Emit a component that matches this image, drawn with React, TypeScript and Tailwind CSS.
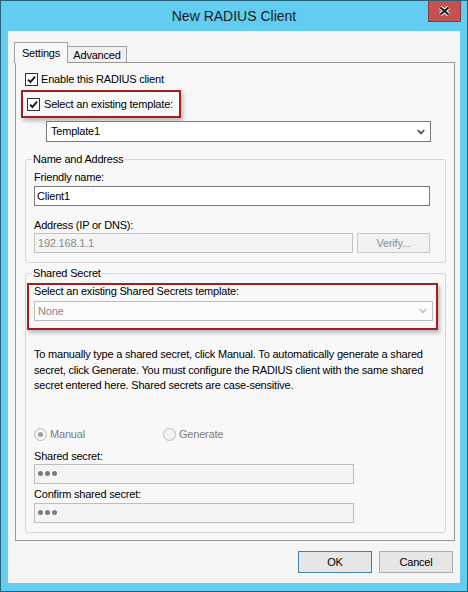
import React from 'react';

function CheckBox({ checked }: { checked: boolean }) {
  return (
    <span className="flex h-[13px] w-[13px] shrink-0 items-center justify-center border border-[#333333] bg-white">
      {checked && (
        <svg width="9" height="9" viewBox="0 0 9 9">
          <path d="M1 4.6 L3.4 7 L8 1.6" fill="none" stroke="#1a1a1a" strokeWidth="1.9" />
        </svg>
      )}
    </span>
  );
}

function Radio({ checked }: { checked: boolean }) {
  return (
    <span className="flex h-[13px] w-[13px] shrink-0 items-center justify-center rounded-full border border-[#bcbcbc] bg-[#f4f4f4]">
      {checked && <span className="h-[5px] w-[5px] rounded-full bg-[#a0a0a0]" />}
    </span>
  );
}

function Chevron({ color }: { color: string }) {
  return (
    <svg width="8" height="6" viewBox="0 0 8 6">
      <path d="M0.8 1 L4 4.4 L7.2 1" fill="none" stroke={color} strokeWidth="1.8" />
    </svg>
  );
}

function Dots() {
  return (
    <div className="flex items-center gap-[2px] pl-[3px]">
      <span className="h-[5px] w-[5px] rounded-full bg-[#7d7d7d]" />
      <span className="h-[5px] w-[5px] rounded-full bg-[#7d7d7d]" />
      <span className="h-[5px] w-[5px] rounded-full bg-[#7d7d7d]" />
    </div>
  );
}

export default function App() {
  return (
    <div className="flex h-[592px] w-[468px] flex-col border border-[#2a6478] bg-[#62cdf0] font-['Liberation_Sans',Arial,sans-serif] text-[11px] leading-[13px] tracking-[-0.2px] text-black">
      {/* title bar */}
      <div className="relative flex h-[30px] shrink-0 items-center justify-center">
        <span className="pt-[1px] text-[14px] tracking-normal text-[#1c1c1c]">New RADIUS Client</span>
        <div className="absolute right-[6px] top-0 flex h-[21px] w-[33px] items-center justify-center border border-[#8a3a3a] border-t-0 bg-[#c75050]">
          <svg width="11" height="10" viewBox="0 0 11 10">
            <path d="M1.5 1.5 L9.5 8.5 M9.5 1.5 L1.5 8.5" stroke="#ffffff" strokeWidth="4" />
            <path d="M1.5 1.5 L9.5 8.5 M9.5 1.5 L1.5 8.5" stroke="#1d1d1d" strokeWidth="2.2" />
          </svg>
        </div>
      </div>

      {/* client area */}
      <div className="mx-[7px] mb-[8px] flex flex-1 flex-col bg-[#f5f5f5]">
        {/* tabs */}
        <div className="flex items-end pl-[6px] pt-[11px]">
          <div className="relative z-10 -mb-px flex h-[21px] w-[54px] items-start justify-center border border-b-0 border-[#a3a3a3] bg-[#f8f8f8] pt-[4px]">
            Settings
          </div>
          <div className="flex h-[16px] w-[59px] items-center justify-center border border-b-0 border-l-0 border-[#a3a3a3] bg-[#f0f0f0] pt-[1px]">
            Advanced
          </div>
        </div>

        {/* tab page */}
        <div className="ml-[7px] flex h-[479px] w-[440px] flex-col border border-[#999999] bg-[#f8f8f8]">
          <div className="ml-[9px] mt-[10px] flex items-center gap-[3px]">
            <CheckBox checked />
            <span>Enable this RADIUS client</span>
          </div>

          <div className="ml-[5px] mt-[4px] flex h-[28px] w-[160px] items-center gap-[4px] border-2 border-[#a51d1d] pl-[4px] shadow-[2px_3px_4px_rgba(0,0,0,0.25)]">
            <CheckBox checked />
            <span>Select an existing template:</span>
          </div>

          <div className="ml-[30px] mt-[3px] flex h-[21px] w-[385px] items-center justify-between border border-[#7a7a7a] bg-white pl-[4px] pr-[5px]">
            <span>Template1</span>
            <Chevron color="#4d4d4d" />
          </div>

          {/* Name and Address */}
          <fieldset className="ml-[9px] mt-[11px] w-[421px] rounded-[3px] border border-[#d6d6d6] pb-[9px] pl-[8px]">
            <legend className="-ml-[2px] px-[1px] leading-[13px]">Name and Address</legend>
            <div className="mt-[5px]">Friendly name:</div>
            <div className="mt-[2px] flex h-[20px] w-[396px] items-center border border-[#7a7a7a] bg-white pl-[2px]">
              Client1
            </div>
            <div className="mt-[13px]">Address (IP or DNS):</div>
            <div className="mt-[1px] flex items-center gap-[4px]">
              <div className="flex h-[20px] w-[319px] items-center border border-[#c2c2c2] bg-[#f4f4f4] pl-[3px] text-[#8a8a8a]">
                192.168.1.1
              </div>
              <div className="flex h-[20px] w-[73px] items-center justify-center border border-[#c9c9c9] bg-[#f2f2f2] text-[#8d8d8d]">
                Verify...
              </div>
            </div>
          </fieldset>

          {/* Shared Secret */}
          <fieldset className="ml-[9px] mt-[4px] w-[421px] rounded-[3px] border border-[#d6d6d6] pb-[9px] pl-[8px]">
            <legend className="-ml-[2px] px-[1px] leading-[13px]">Shared Secret</legend>
            <div className="-ml-[7px] mt-[3px] w-[411px] border-2 border-[#a51d1d] pb-[7px] pl-[5px] shadow-[2px_3px_4px_rgba(0,0,0,0.25)]">
              <div>Select an existing Shared Secrets template:</div>
              <div className="mt-[3px] flex h-[20px] w-[399px] items-center justify-between border border-[#bdbdbd] bg-[#fcfcfc] pl-[3px] pr-[5px] text-[#8a8a8a]">
                <span>None</span>
                <Chevron color="#c4c4c4" />
              </div>
            </div>

            <p className="mt-[17px] whitespace-nowrap leading-[15.5px]">
              To manually type a shared secret, click Manual. To automatically generate a shared
              <br />
              secret, click Generate. You must configure the RADIUS client with the same shared
              <br />
              secret entered here. Shared secrets are case-sensitive.
            </p>

            <div className="mt-[34px] flex items-center text-[#7d7d7d]">
              <div className="flex w-[129px] items-center gap-[3px]">
                <Radio checked />
                <span>Manual</span>
              </div>
              <div className="flex items-center gap-[3px]">
                <Radio checked={false} />
                <span>Generate</span>
              </div>
            </div>

            <div className="mt-[9px]">Shared secret:</div>
            <div className="mt-[1px] flex h-[20px] w-[320px] items-center border border-[#bdbdbd] bg-[#f4f4f4]">
              <Dots />
            </div>
            <div className="mt-[4px]">Confirm shared secret:</div>
            <div className="mt-[2px] flex h-[20px] w-[320px] items-center border border-[#bdbdbd] bg-[#f4f4f4]">
              <Dots />
            </div>
          </fieldset>
        </div>

        {/* buttons */}
        <div className="mt-[10px] flex justify-end gap-[7px] pr-[7px]">
          <button className="flex h-[22px] w-[74px] items-center justify-center border border-[#3c7fb1] bg-[#e6e6e6]">
            OK
          </button>
          <button className="flex h-[22px] w-[74px] items-center justify-center border border-[#acacac] bg-[#e6e6e6]">
            Cancel
          </button>
        </div>
      </div>
    </div>
  );
}
